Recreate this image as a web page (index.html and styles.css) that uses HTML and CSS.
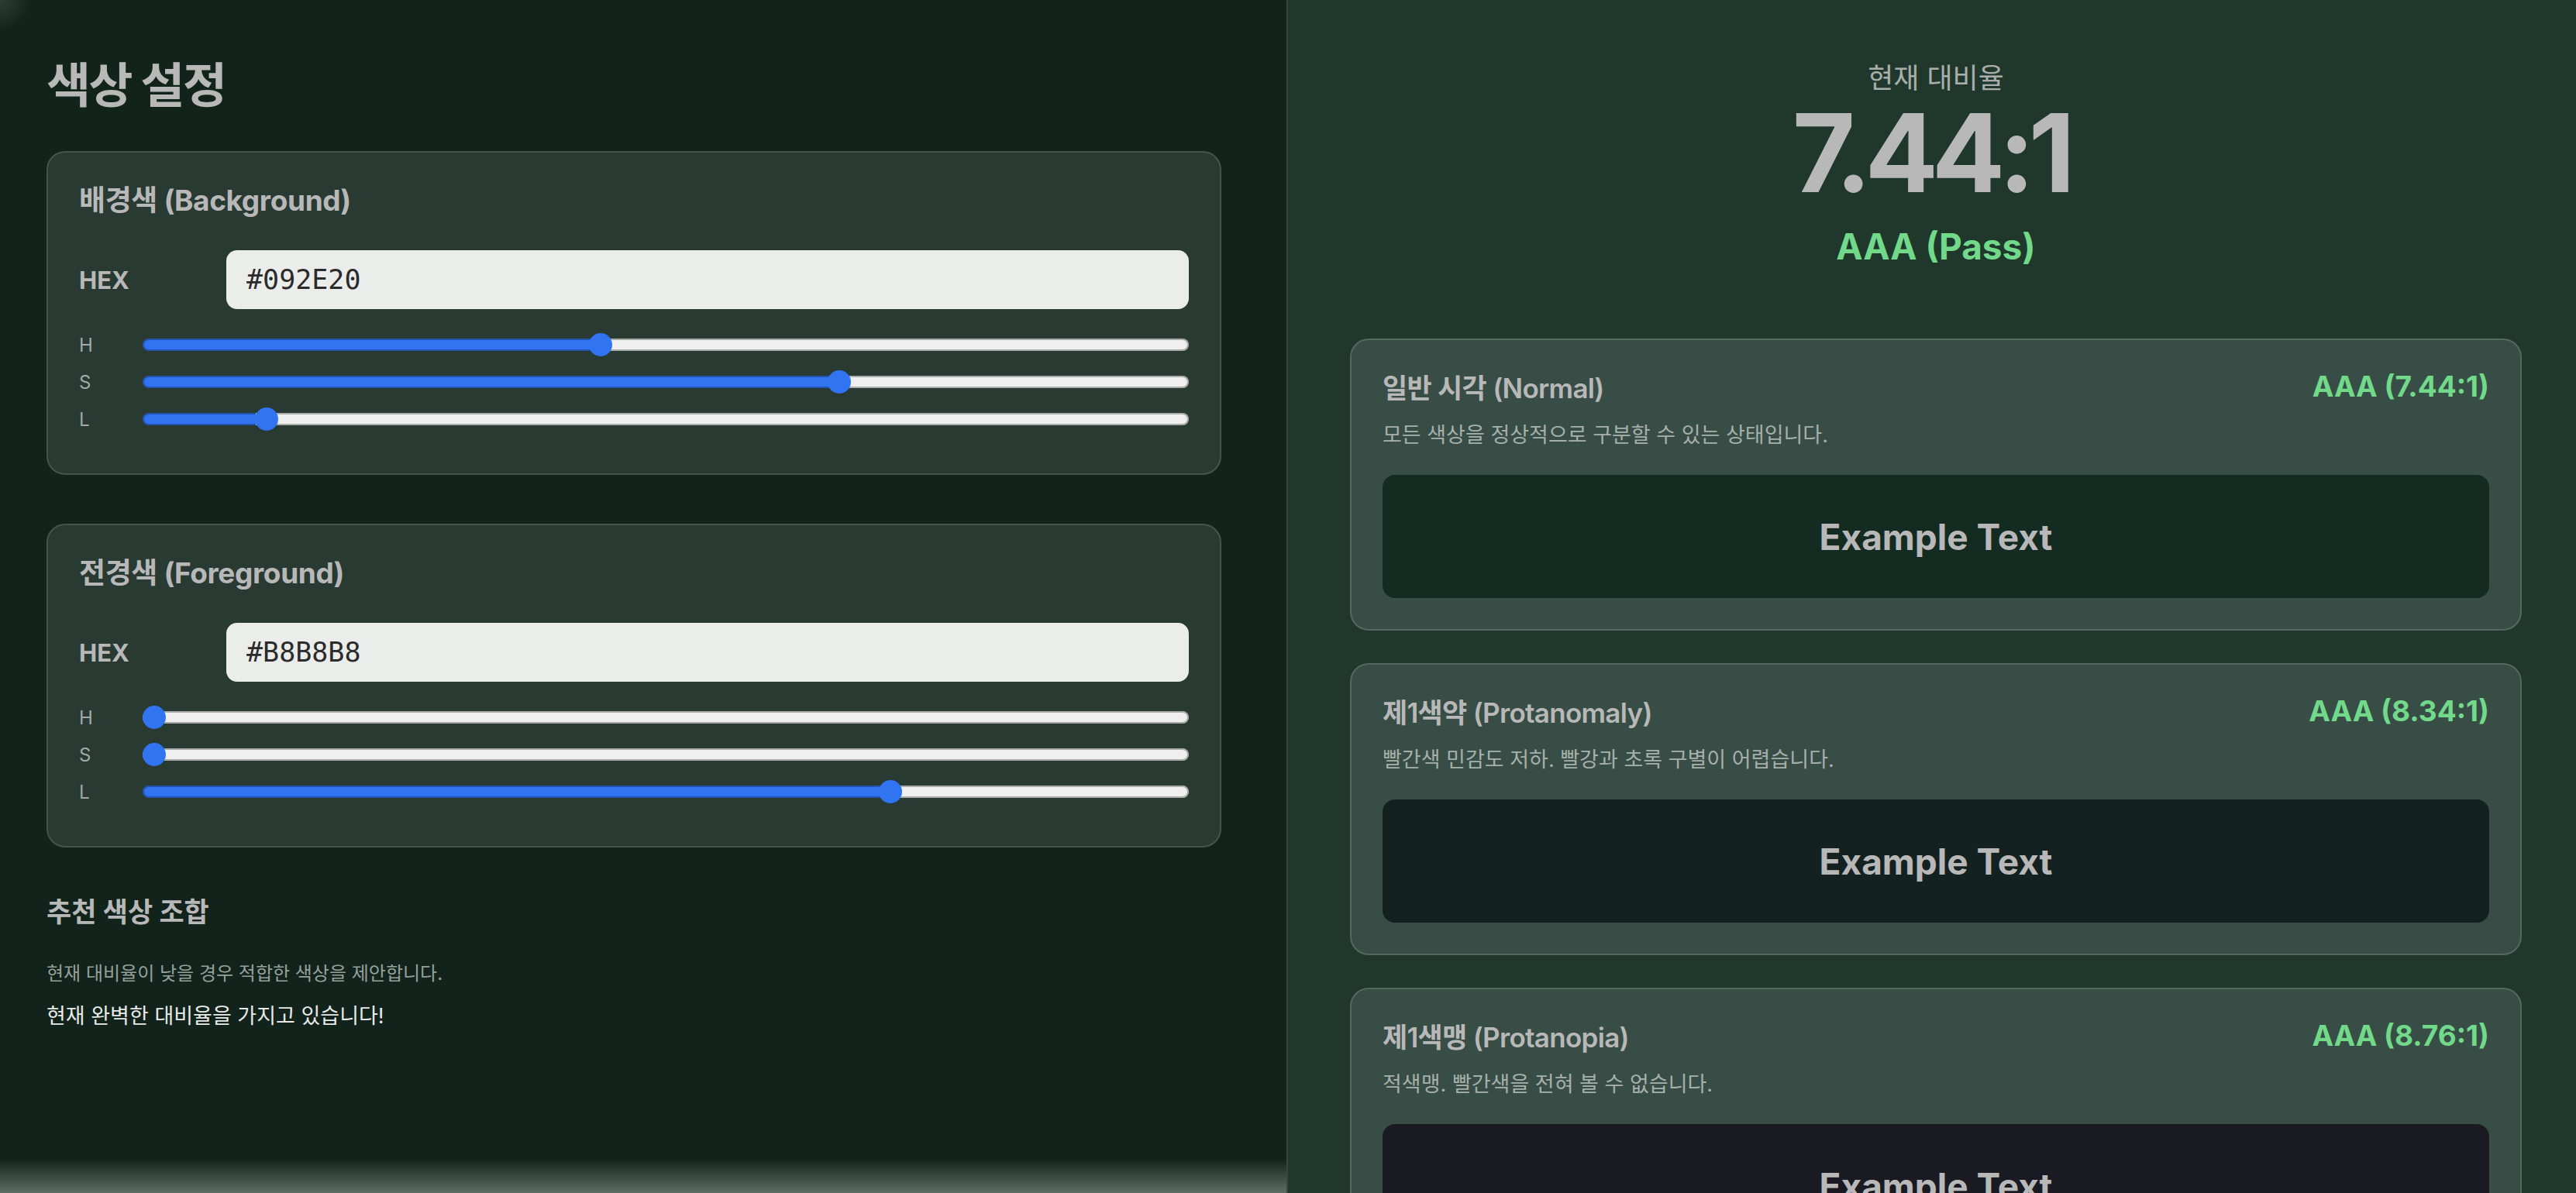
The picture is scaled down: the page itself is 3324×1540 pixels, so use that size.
FILE: index.html
```html
<!DOCTYPE html>
<html lang="ko">
<head>
    <meta charset="UTF-8">
    <meta name="viewport" content="width=device-width, initial-scale=1.0">
    <title>색상 대비 검사기</title>
    <link rel="stylesheet" href="styles.css">
</head>
<body>
    <div class="app">
        <div class="controls">
            <h1>색상 설정</h1>

            <div class="color-card">
                <h3>배경색 (Background)</h3>
                <div class="hex-row">
                    <label for="bgHex">HEX</label>
                    <input class="hex-input" id="bgHex" type="text" value="#092E20">
                </div>
                <div class="hsl">
                    <div class="hsl-row"><span>H</span><input class="slider" type="range" min="0" max="360" value="157" style="--fill: 43.7%"></div>
                    <div class="hsl-row"><span>S</span><input class="slider" type="range" min="0" max="100" value="67" style="--fill: 67.3%"></div>
                    <div class="hsl-row"><span>L</span><input class="slider" type="range" min="0" max="100" value="11" style="--fill: 10.8%"></div>
                </div>
            </div>

            <div class="color-card">
                <h3>전경색 (Foreground)</h3>
                <div class="hex-row">
                    <label for="fgHex">HEX</label>
                    <input class="hex-input" id="fgHex" type="text" value="#B8B8B8">
                </div>
                <div class="hsl">
                    <div class="hsl-row"><span>H</span><input class="slider" type="range" min="0" max="360" value="0" style="--fill: 0%"></div>
                    <div class="hsl-row"><span>S</span><input class="slider" type="range" min="0" max="100" value="0" style="--fill: 0%"></div>
                    <div class="hsl-row"><span>L</span><input class="slider" type="range" min="0" max="100" value="72" style="--fill: 72.2%"></div>
                </div>
            </div>

            <h3 class="suggest-title">추천 색상 조합</h3>
            <p class="suggest-sub">현재 대비율이 낮을 경우 적합한 색상을 제안합니다.</p>
            <p class="suggest-msg">현재 완벽한 대비율을 가지고 있습니다!</p>
        </div>

        <div class="preview">
            <div class="ratio-box">
                <div class="ratio-label">현재 대비율</div>
                <div class="ratio-value">7.44:1</div>
                <div class="ratio-grade">AAA (Pass)</div>
            </div>

            <div class="sim-card">
                <div class="sim-head">
                    <h4>일반 시각 (Normal)</h4>
                    <span class="sim-grade">AAA (7.44:1)</span>
                </div>
                <p class="sim-desc">모든 색상을 정상적으로 구분할 수 있는 상태입니다.</p>
                <div class="sim-sample" style="background-color: #132b20">Example Text</div>
            </div>

            <div class="sim-card">
                <div class="sim-head">
                    <h4>제1색약 (Protanomaly)</h4>
                    <span class="sim-grade">AAA (8.34:1)</span>
                </div>
                <p class="sim-desc">빨간색 민감도 저하. 빨강과 초록 구별이 어렵습니다.</p>
                <div class="sim-sample" style="background-color: #142121">Example Text</div>
            </div>

            <div class="sim-card">
                <div class="sim-head">
                    <h4>제1색맹 (Protanopia)</h4>
                    <span class="sim-grade">AAA (8.76:1)</span>
                </div>
                <p class="sim-desc">적색맹. 빨간색을 전혀 볼 수 없습니다.</p>
                <div class="sim-sample" style="background-color: #191a22">Example Text</div>
            </div>
        </div>
    </div>
</body>
</html>
```

FILE: styles.css
```css
body {
    margin: 0;
    font-family: "Inter", "Noto Sans CJK KR", sans-serif;
    color: #b8b8b8;
    background-color: #20372c;
    overflow: hidden;
}

.app {
    display: grid;
    grid-template-columns: 1fr 1fr;
    height: 100vh;
}

/* left side: color inputs */
.controls {
    padding: 72px 84px 0 60px;
    background-color: #11231a;
    background-image:
        radial-gradient(circle at 0 0, rgba(255, 255, 255, 0.12), rgba(255, 255, 255, 0) 40px),
        linear-gradient(to top, rgba(170, 182, 176, 0.5), rgba(170, 182, 176, 0) 44px);
    border-right: 2px solid #37463f;
    overflow: hidden;
}

.controls h1 {
    margin: 0 0 46px;
    font-size: 62px;
    line-height: 77px;
    font-weight: 700;
    letter-spacing: -0.04em;
}

.color-card {
    background-color: #293a33;
    border: 2px solid #43554c;
    border-radius: 24px;
    padding: 40px 40px 52px;
    margin-bottom: 63px;
}

.color-card h3 {
    margin: 0 0 42px;
    font-size: 37px;
    line-height: 44px;
    font-weight: 700;
    letter-spacing: -0.01em;
}

.hex-row {
    display: flex;
    align-items: center;
    margin-bottom: 28px;
}

.hex-row label {
    width: 190px;
    font-size: 31px;
    font-weight: 700;
}

.hex-input {
    flex: 1;
    height: 76px;
    box-sizing: border-box;
    border: none;
    border-radius: 14px;
    background-color: #ebedeb;
    padding: 0 26px;
    font-family: "DejaVu Sans Mono", monospace;
    font-size: 35px;
    color: #2b2b2b;
    outline: none;
}

.hsl {
    display: flex;
    flex-direction: column;
    gap: 12px;
}

.hsl-row {
    display: flex;
    align-items: center;
    height: 36px;
}

.hsl-row span {
    width: 82px;
    font-size: 24px;
    color: #a3a9a6;
}

.slider {
    -webkit-appearance: none;
    appearance: none;
    flex: 1;
    height: 16px;
    margin: 0;
    border-radius: 8px;
    background: linear-gradient(to right, #3174f1 var(--fill), #efefef var(--fill));
    box-shadow: inset 0 0 0 2px rgba(0, 0, 0, 0.28);
}

.slider::-webkit-slider-thumb {
    -webkit-appearance: none;
    width: 30px;
    height: 30px;
    border-radius: 50%;
    background-color: #3174f1;
    border: none;
}

.suggest-title {
    margin: 0 0 46px;
    font-size: 35px;
    line-height: 40px;
    font-weight: 700;
}

.suggest-sub {
    margin: 0 0 24px;
    font-size: 24px;
    line-height: 28px;
    color: #97a09b;
}

.suggest-msg {
    margin: 0;
    font-size: 27px;
    line-height: 34px;
    color: #e8e9e8;
}

/* right side: contrast result and simulations */
.preview {
    padding: 80px 70px 0 80px;
    overflow: hidden;
}

.ratio-box {
    text-align: center;
    margin-bottom: 91px;
}

.ratio-label {
    font-size: 36px;
    line-height: 42px;
    color: #a9aeab;
}

.ratio-value {
    margin-top: 16px;
    padding-right: 14px;
    font-size: 140px;
    line-height: 118px;
    font-weight: 700;
    letter-spacing: -0.06em;
}

.ratio-grade {
    margin-top: 34px;
    font-size: 46px;
    line-height: 56px;
    font-weight: 700;
    color: #72d98b;
}

.sim-card {
    background-color: #374d45;
    border: 2px solid #55685e;
    border-radius: 24px;
    padding: 40px;
    margin-bottom: 42px;
}

.sim-head {
    display: flex;
    justify-content: space-between;
    align-items: center;
    height: 38px;
}

.sim-head h4 {
    margin: 0;
    font-size: 35px;
    font-weight: 600;
    letter-spacing: -0.02em;
}

.sim-grade {
    font-size: 37px;
    font-weight: 700;
    color: #72d98b;
}

.sim-desc {
    margin: 29px 0 35px;
    font-size: 27px;
    line-height: 32px;
    color: #a6b0ab;
}

.sim-sample {
    height: 159px;
    border-radius: 16px;
    display: flex;
    align-items: center;
    justify-content: center;
    font-size: 46px;
    font-weight: 700;
}
```
